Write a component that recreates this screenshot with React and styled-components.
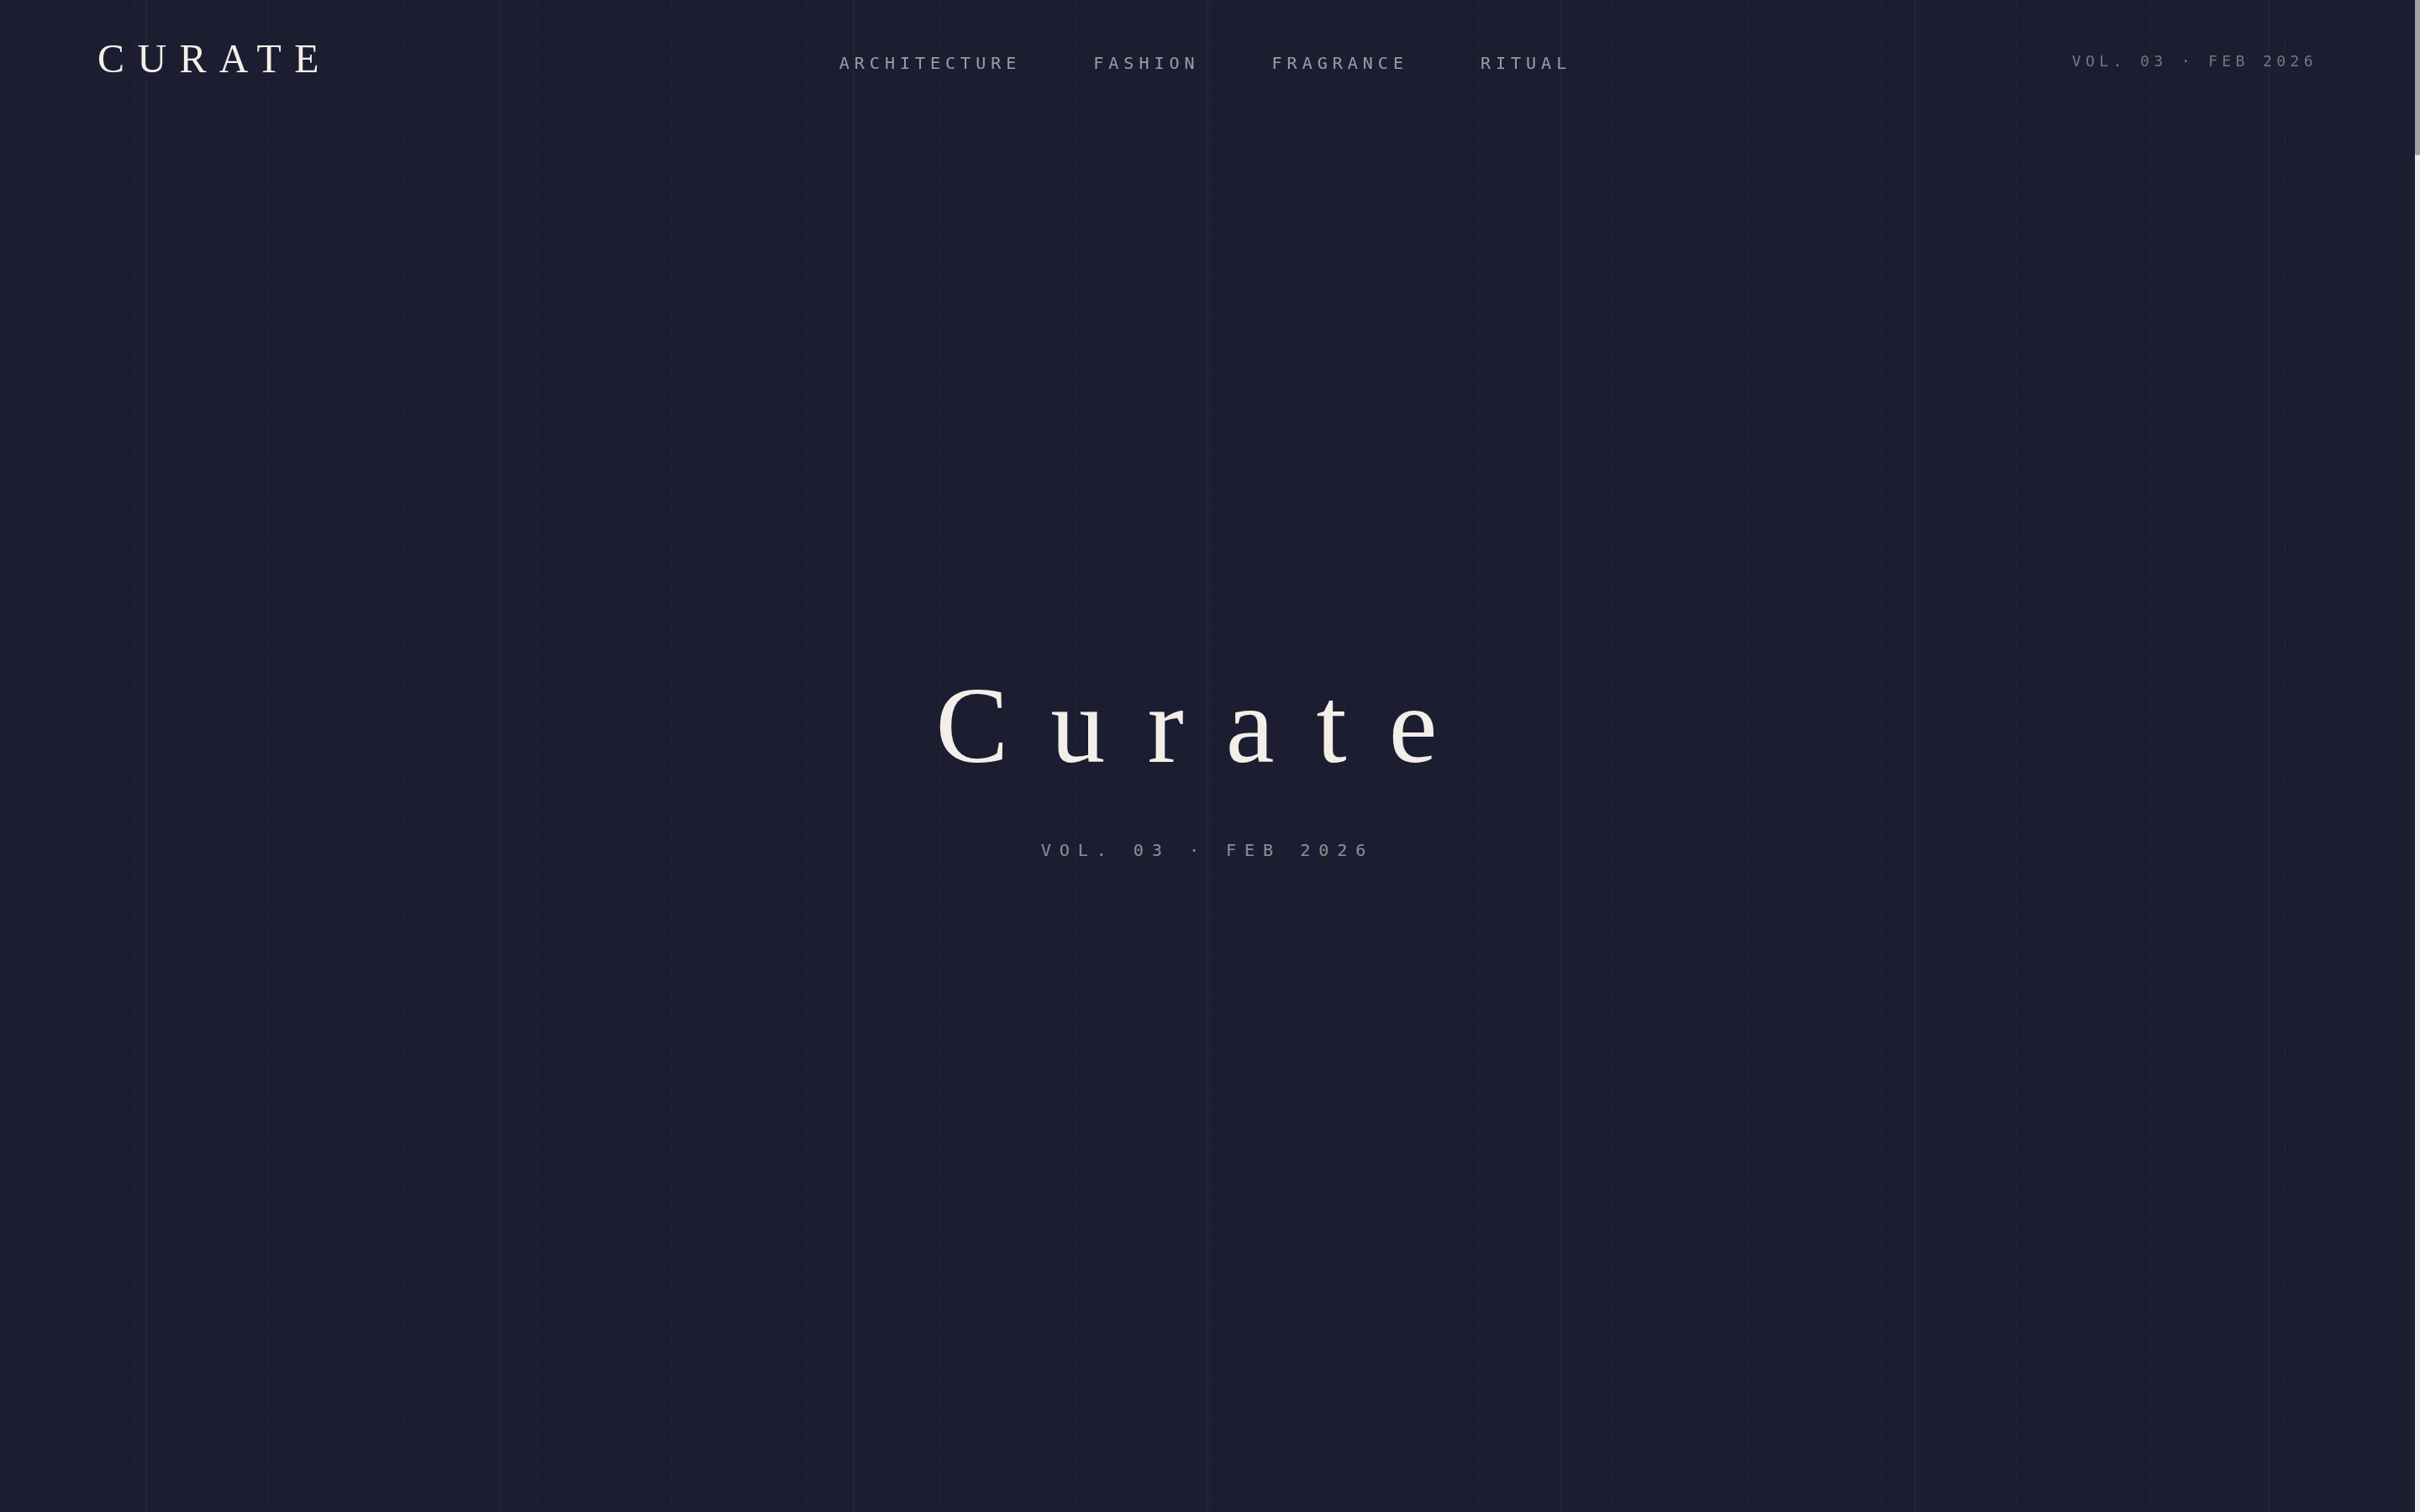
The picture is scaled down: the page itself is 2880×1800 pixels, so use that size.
import React from "react";
import styled, { createGlobalStyle } from "styled-components";

const serif = `"Liberation Serif", "Times New Roman", serif`;
const mono = `"DejaVu Sans Mono", "Liberation Mono", monospace`;

const GlobalStyle = createGlobalStyle`
    html, body {
        margin: 0;
        padding: 0;
        background: #1c1d30;
        color: #f3eee8;
    }
`;

// thin reading rail on the right edge (cream track, grey marker)
const Rail = styled.div`
    position: fixed;
    top: 0;
    right: 0;
    bottom: 0;
    width: 6px;
    z-index: 3;
    background: #f3efe9;
`;

const RailThumb = styled.div`
    height: ${(props) => props.size}px;
    background: #a2a2a4;
    border-radius: 0 0 3px 3px;
`;

// faint column rules that sit over the whole page
const Rules = styled.div`
    position: fixed;
    top: 0;
    left: 0;
    bottom: 0;
    right: 6px;
    pointer-events: none;
    z-index: 1;
    background-image: linear-gradient(
        to right,
        transparent 210px,
        rgba(255, 255, 255, 0.055) 210px,
        rgba(255, 255, 255, 0.055) 211px,
        transparent 211px
    );
    background-size: 421px 100%;
    background-position: 50% 0;
`;

const DashedRules = styled.div`
    position: fixed;
    top: 0;
    left: 0;
    bottom: 0;
    right: 6px;
    pointer-events: none;
    z-index: 1;
    background-image: linear-gradient(to right, transparent 159px, rgba(255, 255, 255, 0.06) 159px);
    background-size: 160px 100%;
    -webkit-mask-image: repeating-linear-gradient(to bottom, #000 0 3px, transparent 3px 6px);
    mask-image: repeating-linear-gradient(to bottom, #000 0 3px, transparent 3px 6px);
`;

const Header = styled.header`
    position: fixed;
    top: 0;
    left: 0;
    right: 6px;
    z-index: 2;
    height: 140px;
    padding: 0 112px 0 116px;
    display: grid;
    grid-template-columns: 1fr auto 1fr;
    align-items: center;
`;

const Logo = styled.div`
    font-family: ${serif};
    font-size: 48px;
    line-height: 1;
    letter-spacing: 0.32em;
    color: #f3eee8;
`;

const Nav = styled.nav`
    display: flex;
    gap: 86px;
    margin-top: 10px;
    margin-left: -9px;
`;

const NavLink = styled.a`
    font-family: ${mono};
    font-size: 20px;
    line-height: 1;
    letter-spacing: 0.3em;
    color: rgba(243, 238, 232, 0.6);
    text-decoration: none;
`;

const Issue = styled.div`
    justify-self: end;
    margin-top: 5px;
    margin-right: 4px;
    font-family: ${mono};
    font-size: 18px;
    line-height: 1;
    letter-spacing: 0.3em;
    color: rgba(243, 238, 232, 0.42);
`;

const Main = styled.main`
    margin-right: 6px;
`;

const Hero = styled.section`
    height: 100vh;
    box-sizing: border-box;
    padding-top: 20px;
    display: flex;
    flex-direction: column;
    align-items: center;
    justify-content: center;
    text-align: center;
`;

const Title = styled.h1`
    margin: 0;
    font-family: ${serif};
    font-weight: 400;
    font-size: 130px;
    line-height: 1;
    letter-spacing: 0.385em;
    color: #f3eee8;
`;

const Subtitle = styled.div`
    margin-top: 74px;
    font-family: ${mono};
    font-size: 20px;
    line-height: 1;
    letter-spacing: 0.5em;
    color: rgba(243, 238, 232, 0.55);
`;

const Spreads = styled.div`
    height: 15714px;
`;

const sections = ["Architecture", "Fashion", "Fragrance", "Ritual"];

function App() {
    return (
        <>
            <GlobalStyle />
            <Rules />
            <DashedRules />
            <Rail>
                <RailThumb size={185} />
            </Rail>
            <Header>
                <Logo>CURATE</Logo>
                <Nav>
                    {sections.map((item) => (
                        <NavLink key={item} href={"#" + item.toLowerCase()}>
                            {item.toUpperCase()}
                        </NavLink>
                    ))}
                </Nav>
                <Issue>VOL. 03 · FEB 2026</Issue>
            </Header>
            <Main>
                <Hero>
                    <Title>Curate</Title>
                    <Subtitle>VOL. 03 · FEB 2026</Subtitle>
                </Hero>
                <Spreads />
            </Main>
        </>
    );
}

export default App;
